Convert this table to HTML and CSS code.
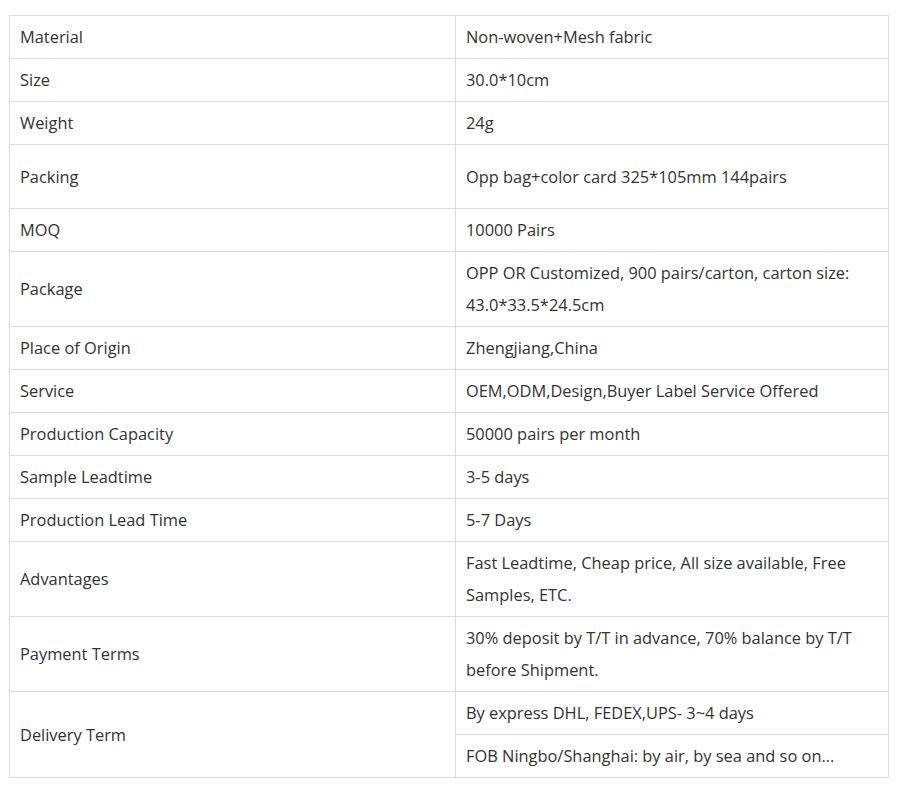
FILE: index.html
```html
<!DOCTYPE html>
<html>
<head>
<meta charset="utf-8">
<link rel="stylesheet" href="styles.css">
</head>
<body>
<table class="spec">
  <colgroup><col class="c1"><col class="c2"></colgroup>
  <tbody>
    <tr><td>Material</td><td>Non-woven+Mesh fabric</td></tr>
    <tr><td>Size</td><td>30.0*10cm</td></tr>
    <tr><td>Weight</td><td>24g</td></tr>
    <tr class="tall"><td>Packing</td><td>Opp bag+color card 325*105mm 144pairs</td></tr>
    <tr><td>MOQ</td><td>10000 Pairs</td></tr>
    <tr><td>Package</td><td>OPP OR Customized, 900 pairs/carton, carton size: 43.0*33.5*24.5cm</td></tr>
    <tr><td>Place of Origin</td><td>Zhengjiang,China</td></tr>
    <tr><td>Service</td><td>OEM,ODM,Design,Buyer Label Service Offered</td></tr>
    <tr><td>Production Capacity</td><td>50000 pairs per month</td></tr>
    <tr><td>Sample Leadtime</td><td>3-5 days</td></tr>
    <tr><td>Production Lead Time</td><td>5-7 Days</td></tr>
    <tr><td>Advantages</td><td>Fast Leadtime, Cheap price, All size available, Free Samples, ETC.</td></tr>
    <tr><td>Payment Terms</td><td>30% deposit by T/T in advance, 70% balance by T/T before Shipment.</td></tr>
    <tr><td rowspan="2">Delivery Term</td><td>By express DHL, FEDEX,UPS- 3~4 days</td></tr>
    <tr><td>FOB Ningbo/Shanghai: by air, by sea and so on...</td></tr>
  </tbody>
</table>
</body>
</html>
```
FILE: styles.css
```css
html, body { background: #fff; }
body {
  margin: 15px 0 0 9px;
  font-family: "Open Sans", "Noto Sans", sans-serif;
  color: #333;
}
.spec {
  border-collapse: collapse;
  table-layout: fixed;
  width: 879px;
  font-size: 16.4px;
}
.c1 { width: 446px; }
.c2 { width: 433px; }
.spec td {
  border: 1px solid #dcdcdc;
  padding: 5px 10px;
  line-height: 32px;
  height: 32px;
  vertical-align: middle;
  text-align: left;
}
.spec tr.tall td { height: 53px; }
```
